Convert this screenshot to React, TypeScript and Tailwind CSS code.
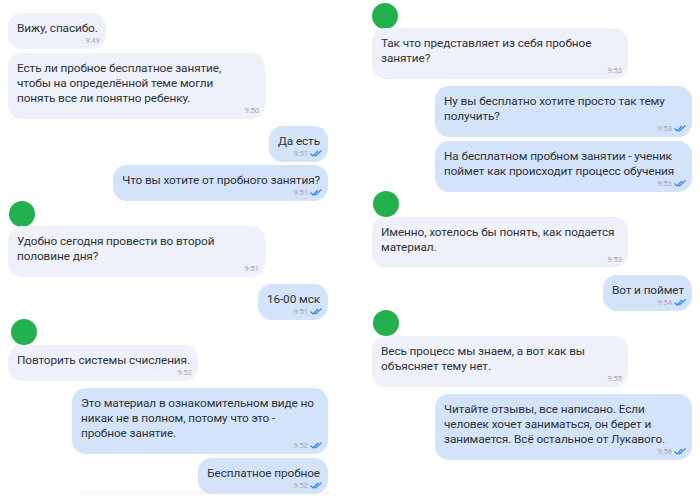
const font = "font-['Roboto','Noto_Sans',sans-serif]"

function Checks() {
  return (
    <svg width="12" height="7" viewBox="0 0 12 7" fill="none" stroke="#2f86f0" strokeWidth="1.2" className="ml-[2px]">
      <path d="M0.5 3.5 L3 6 L8 1" />
      <path d="M4.5 5 L5.5 6 L11.5 0.5" />
    </svg>
  )
}

function Avatar({ className = '' }: { className?: string }) {
  return <div className={`w-[26px] h-[26px] shrink-0 rounded-full bg-[#22b14c] ${className}`} />
}

function Bubble({ text, time, out, className = '' }: { text: string; time: string; out?: boolean; className?: string }) {
  return (
    <div
      className={`shrink-0 rounded-[14px] pl-[9px] pr-[8px] pt-[7.5px] pb-[3.5px] ${out ? 'self-end bg-[#d2e3fa]' : 'self-start bg-[#eef1f9]'} ${className}`}
    >
      <p className="text-[11.8px] tracking-[-0.1px] leading-[15px] text-[#2f3238] whitespace-pre">{text}</p>
      <div className="flex items-center justify-end h-[10px] -mr-[2px] text-[7.5px] text-[#a2a6b0]">
        <span>{time}</span>
        {out && <Checks />}
      </div>
    </div>
  )
}

export default function App() {
  return (
    <div className={`w-[700px] h-[502px] bg-white overflow-hidden flex gap-[44px] pl-[8px] ${font}`}>
      {/* Left column */}
      <div className="w-[320px] flex flex-col pt-[13px]">
        <Bubble text="Вижу, спасибо." time="9:49" />
        <Bubble className="mt-[4px] w-[257px]" text={'Есть ли пробное бесплатное занятие,\nчтобы на определённой теме могли\nпонять все ли понятно ребенку.'} time="9:50" />
        <Bubble out className="mt-[7px]" text="Да есть" time="9:51" />
        <Bubble out className="mt-[3px]" text="Что вы хотите от пробного занятия?" time="9:51" />
        <Avatar className="ml-[1px]" />
        <Bubble className="-mt-[1px] w-[257px]" text={'Удобно сегодня провести во второй\nполовине дня?'} time="9:51" />
        <Bubble out className="mt-[7px]" text="16-00 мск" time="9:51" />
        <Avatar className="ml-[3px] -mt-[1px]" />
        <Bubble text="Повторить системы счисления." time="9:52" />
        <Bubble out className="mt-[7px] w-[256px]" text={'Это материал в ознакомительном виде но\nникак не в полном, потому что это -\nпробное занятие.'} time="9:52" />
        <Bubble out className="relative mt-[4px]" text="Бесплатное пробное" time="9:52" />
        {/* faint edge of the next message, cut off by the crop */}
        <div className="-mt-[3px] ml-[69px] w-[257px] h-[6px] rounded-t-[6px] bg-gradient-to-b from-[#f3f4f6] to-white" />
      </div>

      {/* Right column */}
      <div className="w-[320px] flex flex-col pt-[3px]">
        <Avatar />
        <Bubble className="-mt-[1px] w-[256px]" text={'Так что представляет из себя пробное\nзанятие?'} time="9:53" />
        <Bubble out className="mt-[7px] w-[257px]" text={'Ну вы бесплатно хотите просто так тему\nполучить?'} time="9:53" />
        <Bubble out className="mt-[4px] w-[257px]" text={'На бесплатном пробном занятии - ученик\nпоймет как происходит процесс обучения'} time="9:53" />
        <Avatar className="ml-[1px] -mt-[1px]" />
        <Bubble className="w-[256px]" text={'Именно, хотелось бы понять, как подается\nматериал.'} time="9:53" />
        <Bubble out className="mt-[7px]" text="Вот и поймет" time="9:54" />
        <Avatar className="ml-[1px] -mt-[1px]" />
        <Bubble className="w-[256px]" text={'Весь процесс мы знаем, а вот как вы\nобъясняет тему нет.'} time="9:55" />
        <Bubble out className="mt-[7px] w-[257px]" text={'Читайте отзывы, все написано. Если\nчеловек хочет заниматься, он берет и\nзанимается. Всё остальное от Лукавого.'} time="9:56" />
      </div>
    </div>
  )
}
